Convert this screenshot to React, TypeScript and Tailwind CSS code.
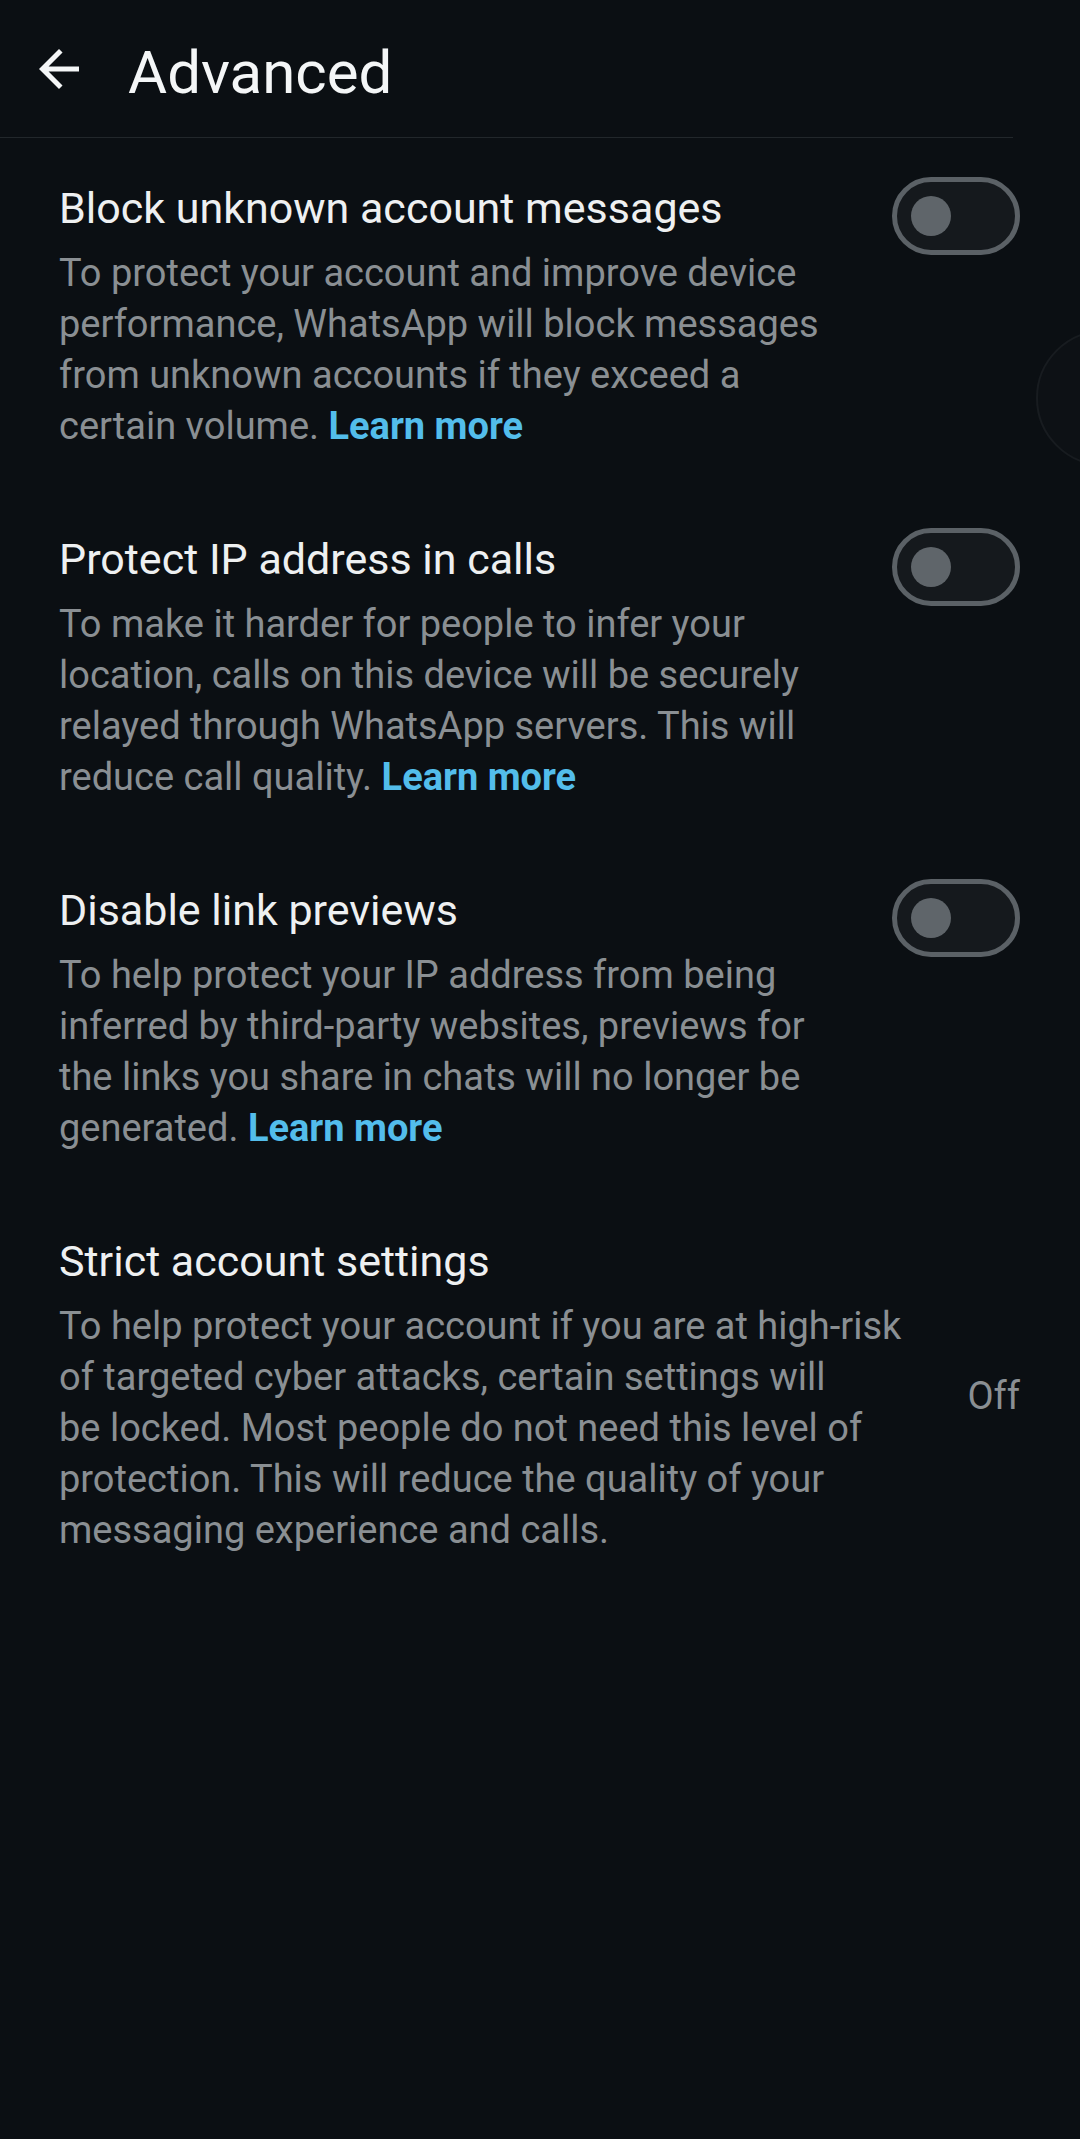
import React from 'react';

type Setting = {
  title: string;
  lines: string[];
  learnMore?: boolean;
  control: 'toggle' | 'off';
};

const settings: Setting[] = [
  {
    title: 'Block unknown account messages',
    lines: [
      'To protect your account and improve device',
      'performance, WhatsApp will block messages',
      'from unknown accounts if they exceed a',
      'certain volume.',
    ],
    learnMore: true,
    control: 'toggle',
  },
  {
    title: 'Protect IP address in calls',
    lines: [
      'To make it harder for people to infer your',
      'location, calls on this device will be securely',
      'relayed through WhatsApp servers. This will',
      'reduce call quality.',
    ],
    learnMore: true,
    control: 'toggle',
  },
  {
    title: 'Disable link previews',
    lines: [
      'To help protect your IP address from being',
      'inferred by third-party websites, previews for',
      'the links you share in chats will no longer be',
      'generated.',
    ],
    learnMore: true,
    control: 'toggle',
  },
  {
    title: 'Strict account settings',
    lines: [
      'To help protect your account if you are at high-risk',
      'of targeted cyber attacks, certain settings will',
      'be locked. Most people do not need this level of',
      'protection. This will reduce the quality of your',
      'messaging experience and calls.',
    ],
    control: 'off',
  },
];

function Toggle() {
  return (
    <div className="flex items-center w-[128px] h-[78px] rounded-full border-[5px] border-[#5b6166] bg-[#15191d] pl-[14px] -mt-[3px] shrink-0">
      <div className="w-[40px] h-[40px] rounded-full bg-[#5f656a]" />
    </div>
  );
}

function SettingRow({ item }: { item: Setting }) {
  const isOff = item.control === 'off';
  return (
    <div className={`flex pl-[59px] pr-[60px] pt-[42px] pb-[37px] ${isOff ? 'items-center' : 'items-start'}`}>
      <div className="flex-1 min-w-0">
        <div className="text-[43px] leading-[56px] text-[#eef0f1] whitespace-nowrap">{item.title}</div>
        <div className="mt-[12px] text-[38px] leading-[51px] text-[#8a8f93]">
          {item.lines.map((line, i) => (
            <div key={i} className="whitespace-nowrap">
              {line}
              {item.learnMore && i === item.lines.length - 1 && (
                <span className="font-bold text-[#53bdeb]"> Learn more</span>
              )}
            </div>
          ))}
        </div>
      </div>
      {isOff ? (
        <div className="mt-[4px] text-[38px] leading-[51px] text-[#8a8f93] shrink-0">Off</div>
      ) : (
        <Toggle />
      )}
    </div>
  );
}

export default function App() {
  return (
    <div
      className="relative w-[1080px] min-h-[2139px] bg-[#0b0f13] overflow-hidden"
      style={{ fontFamily: 'Roboto, "Noto Sans", sans-serif' }}
    >
      {/* Header */}
      <div className="flex items-start h-[137px]">
        <svg viewBox="0 0 24 24" className="w-[60px] h-[60px] mt-[39px] ml-[29px] fill-[#f4f6f7] shrink-0">
          <path d="M20 11H7.83l5.59-5.59L12 4l-8 8 8 8 1.41-1.41L7.83 13H20v-2z" />
        </svg>
        <div className="ml-[39px] mt-[38px] text-[60px] leading-[70px] text-[#f4f6f7]">Advanced</div>
      </div>
      <div className="w-[1013px] h-px bg-[#22272b]" />

      {settings.map((item, i) => (
        <SettingRow key={i} item={item} />
      ))}

      {/* floating bubble at the right edge */}
      <div className="absolute left-[1036px] top-[330px] w-[136px] h-[136px] rounded-full border-2 border-[#181c20] bg-[#0d1115]" />
    </div>
  );
}
